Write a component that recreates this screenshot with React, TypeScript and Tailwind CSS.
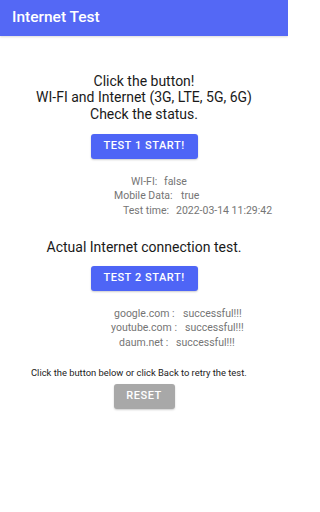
import React from "react";

function Row({ label, value, pl, lw }: { label: string; value: string; pl: string; lw: string }) {
  return (
    <div className={`flex h-[14.5px] items-center whitespace-nowrap text-[10.5px] leading-[14.5px] text-[#757575] ${pl}`}>
      <span className={`${lw} shrink-0`}>{label}</span>
      <span>{value}</span>
    </div>
  );
}

export default function App() {
  return (
    <div className="relative h-[512px] w-[288px] overflow-hidden bg-white" style={{ fontFamily: "Roboto, 'Liberation Sans', sans-serif" }}>
      <div className="flex h-[36px] items-center bg-[#5468f5] px-[12px] shadow-[0_1px_2px_rgba(0,0,0,0.15)]">
        <span className="text-[15.5px] font-medium leading-none text-white">Internet Test</span>
      </div>
      <div className="flex flex-col">
        <div className="mt-[36.75px] text-center text-[14px] leading-[16.5px] text-[#1a1a1a]">
          <div>Click the button!</div>
          <div>WI-FI and Internet (3G, LTE, 5G, 6G)</div>
          <div>Check the status.</div>
        </div>
        <div className="mt-[11.75px] flex justify-center">
          <button className="flex h-[25px] w-[107px] items-center justify-center rounded-[3px] bg-[#4e65f6] text-[11px] font-medium tracking-[0.05em] text-white shadow-[0_1px_2px_rgba(0,0,0,0.2)]">
            TEST 1 START!
          </button>
        </div>
        <div className="mt-[15.5px] flex flex-col">
          <Row label="WI-FI:" value="false" pl="pl-[131px]" lw="w-[33px]" />
          <Row label="Mobile Data:" value="true" pl="pl-[114px]" lw="w-[67px]" />
          <Row label="Test time:" value="2022-03-14 11:29:42" pl="pl-[123px]" lw="w-[53px]" />
        </div>
        <div className="mt-[20.5px] text-center text-[14px] leading-[16.5px] text-[#1a1a1a]">
          Actual Internet connection test.
        </div>
        <div className="mt-[11px] flex justify-center">
          <button className="flex h-[25px] w-[107px] items-center justify-center rounded-[3px] bg-[#4e65f6] text-[11px] font-medium tracking-[0.05em] text-white shadow-[0_1px_2px_rgba(0,0,0,0.2)]">
            TEST 2 START!
          </button>
        </div>
        <div className="mt-[15.75px] flex flex-col">
          <Row label="google.com :" value="successful!!!" pl="pl-[114px]" lw="w-[69px]" />
          <Row label="youtube.com :" value="successful!!!" pl="pl-[111px]" lw="w-[74px]" />
          <Row label="daum.net :" value="successful!!!" pl="pl-[119px]" lw="w-[57px]" />
        </div>
        <div className="mt-[16.5px] whitespace-nowrap pl-[31px] text-left text-[9.4px] leading-[12px] text-[#222222]">
          Click the button below or click Back to retry the test.
        </div>
        <div className="mt-[5.3px] flex justify-center">
          <button className="flex h-[25px] w-[61px] items-center justify-center rounded-[3px] bg-[#a8a8a8] text-[11px] font-medium tracking-[0.05em] text-white shadow-[0_1px_2px_rgba(0,0,0,0.2)]">
            RESET
          </button>
        </div>
      </div>
    </div>
  );
}
